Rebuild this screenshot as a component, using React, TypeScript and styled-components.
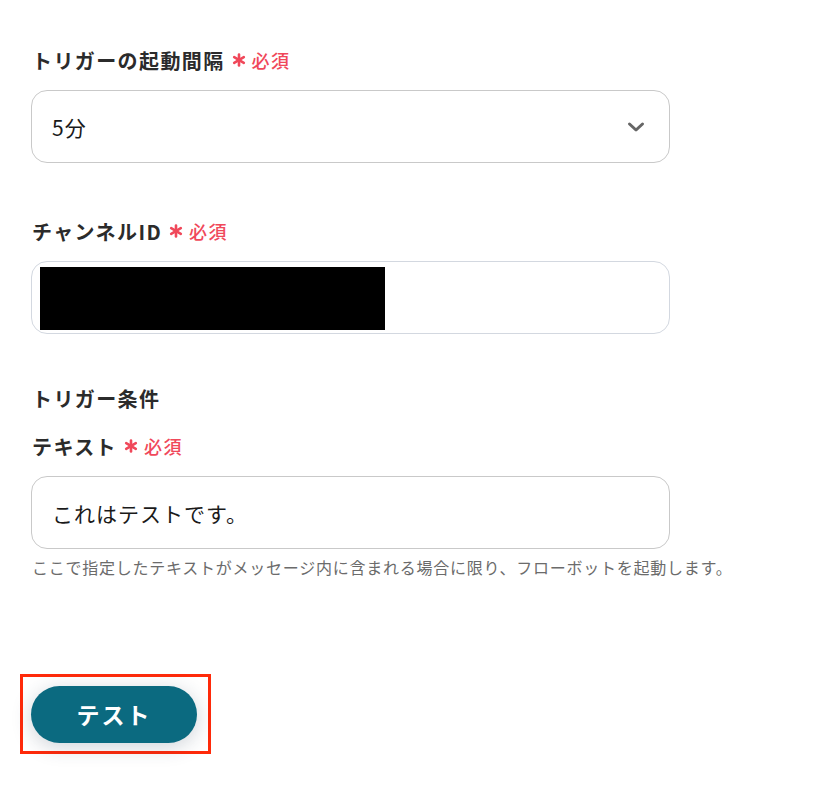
import React from "react";
import styled, { createGlobalStyle } from "styled-components";

const GlobalStyle = createGlobalStyle`
  html, body {
    margin: 0;
    padding: 0;
    background: #ffffff;
  }
  body {
    font-family: "Noto Sans CJK JP", "Noto Sans", sans-serif;
    color: #222222;
  }
`;

const Page = styled.div`
  width: 832px;
  height: 792px;
  padding: 46px 0 0 31px;
  box-sizing: border-box;
  display: flex;
  flex-direction: column;
`;

const Field = styled.div<{ gap?: number }>`
  display: flex;
  flex-direction: column;
  margin-bottom: ${(props) => props.gap ?? 0}px;
`;

const Label = styled.div`
  display: flex;
  align-items: center;
  gap: 7px;
  height: 28px;
  margin-left: 1px;
  margin-bottom: 16px;
  font-size: 20px;
  font-weight: 700;
  color: #2b2b2b;
  letter-spacing: 1.4px;
`;

const SectionTitle = styled.div`
  height: 28px;
  margin-left: 1px;
  margin-bottom: 20px;
  font-size: 20px;
  font-weight: 700;
  color: #2b2b2b;
  letter-spacing: 1.4px;
`;

const Required = styled.span`
  display: inline-flex;
  align-items: center;
  gap: 6px;
  color: #f0485a;
  font-size: 18px;
  font-weight: 500;
  letter-spacing: 1.5px;
`;

const Box = styled.div<{ $border?: string }>`
  width: 639px;
  height: 73px;
  box-sizing: border-box;
  border: 1px solid ${(props) => props.$border ?? "#c9c9c9"};
  border-radius: 16px;
  display: flex;
  align-items: center;
  padding: 0 20px;
  font-size: 21px;
  letter-spacing: 1px;
  color: #1a1a1a;
  background: #ffffff;
`;

const SelectBox = styled(Box)`
  justify-content: space-between;
  padding-right: 24px;
`;

const MaskedBox = styled(Box)`
  padding: 0 0 0 8px;
`;

const Mask = styled.div`
  width: 345px;
  height: 63px;
  background: #000000;
  margin-top: 2px;
`;

const Help = styled.div`
  margin-top: 6px;
  font-size: 16px;
  color: #6b6b6b;
  letter-spacing: 0.75px;
  margin-left: 1px;
  white-space: nowrap;
`;

const ButtonFrame = styled.div`
  margin-top: 95px;
  margin-left: -11px;
  width: 191px;
  height: 80px;
  box-sizing: border-box;
  border: 3px solid #ff2a0a;
  display: flex;
  align-items: center;
  padding-left: 8px;
`;

const TestButton = styled.button`
  width: 166px;
  height: 57px;
  border: 0;
  border-radius: 29px;
  background: #0b6a80;
  color: #ffffff;
  font-family: "Noto Sans CJK JP", "Noto Sans", sans-serif;
  font-size: 23px;
  font-weight: 700;
  letter-spacing: 2px;
  box-shadow: 0 4px 20px rgba(40, 60, 80, 0.22);
  cursor: pointer;
`;

const Chevron = () => (
  <svg width="18" height="12" viewBox="0 0 18 12">
    <path
      d="M2.5 3 L9 9 L15.5 3"
      fill="none"
      stroke="#666666"
      strokeWidth="3"
      strokeLinecap="round"
      strokeLinejoin="round"
    />
  </svg>
);

const Asterisk = () => (
  <svg width="14" height="14" viewBox="0 0 14 14">
    <g stroke="#f0485a" strokeWidth="2.6" strokeLinecap="round">
      <line x1="7" y1="1.5" x2="7" y2="12.5" />
      <line x1="2.2" y1="4.2" x2="11.8" y2="9.8" />
      <line x1="2.2" y1="9.8" x2="11.8" y2="4.2" />
    </g>
  </svg>
);

const RequiredMark = () => (
  <Required>
    <Asterisk />
    <span>必須</span>
  </Required>
);

export default function App() {
  return (
    <>
      <GlobalStyle />
      <Page>
        <Field gap={54}>
          <Label>
            トリガーの起動間隔
            <RequiredMark />
          </Label>
          <SelectBox>
            <span>5分</span>
            <Chevron />
          </SelectBox>
        </Field>
        <Field gap={50}>
          <Label>
            チャンネルID
            <RequiredMark />
          </Label>
          <MaskedBox $border="#d3d8e0">
            <Mask />
          </MaskedBox>
        </Field>
        <SectionTitle>トリガー条件</SectionTitle>
        <Field>
          <Label>
            テキスト
            <RequiredMark />
          </Label>
          <Box>これはテストです。</Box>
          <Help>ここで指定したテキストがメッセージ内に含まれる場合に限り、フローボットを起動します。</Help>
        </Field>
        <ButtonFrame>
          <TestButton>テスト</TestButton>
        </ButtonFrame>
      </Page>
    </>
  );
}
